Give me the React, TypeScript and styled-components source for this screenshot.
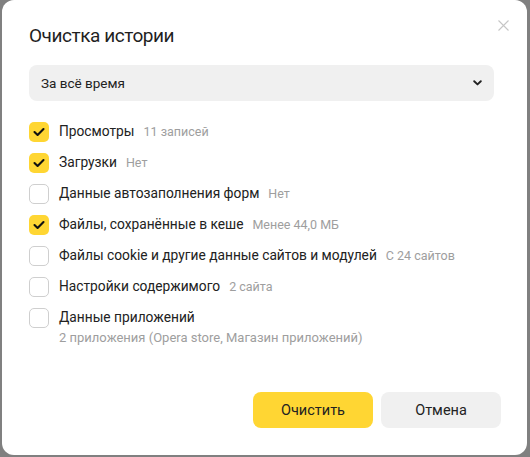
import React from "react";
import styled, { createGlobalStyle } from "styled-components";

const Global = createGlobalStyle`
  html, body { margin: 0; padding: 0; background: #808080; }
  body { font-family: Roboto, "Noto Sans", sans-serif; -webkit-font-smoothing: antialiased; }
`;

const Dialog = styled.div`
  position: relative;
  box-sizing: border-box;
  margin-left: 2px;
  width: 525px;
  height: 455px;
  background: #fff;
  border-radius: 12px;
  padding: 22px 33px 27px 27px;
  display: flex;
  flex-direction: column;
  color: #222;
`;

const Close = styled.button`
  position: absolute;
  top: 18px;
  right: 17px;
  width: 14px;
  height: 14px;
  padding: 0;
  border: 0;
  background: transparent;
  display: flex;
  align-items: center;
  justify-content: center;
`;

const Title = styled.h1`
  margin: 0;
  font-size: 19px;
  letter-spacing: -0.45px;
  line-height: 28px;
  font-weight: 400;
  color: #1f1f1f;
`;

const Select = styled.div`
  margin-top: 15px;
  height: 36px;
  border-radius: 8px;
  background: #f0f0f0;
  display: flex;
  align-items: center;
  justify-content: space-between;
  padding: 0 12px 0 12px;
  font-size: 13.5px;
  color: #222;
`;

const List = styled.div`
  margin-top: 15px;
  display: flex;
  flex-direction: column;
`;

const Row = styled.label`
  display: grid;
  grid-template-columns: 20px 1fr;
  column-gap: 10px;
  align-items: start;
`;

const Box = styled.span<{ $checked: boolean }>`
  box-sizing: border-box;
  margin-top: 5.5px;
  width: 20px;
  height: 20px;
  border-radius: 5px;
  background: ${(p) => (p.$checked ? "#ffd633" : "#fff")};
  border: ${(p) => (p.$checked ? "none" : "1px solid #cfcfcf")};
  display: flex;
  align-items: center;
  justify-content: center;
`;

const Text = styled.div`
  display: flex;
  flex-direction: column;
`;

const Line = styled.div`
  line-height: 31px;
  font-size: 13.75px;
  color: #222;
  white-space: nowrap;
`;

const Hint = styled.span`
  margin-left: 9px;
  font-size: 12.5px;
  color: #9e9e9e;
`;

const Sub = styled.div`
  margin-top: -3px;
  line-height: 16px;
  font-size: 13px;
  color: #9e9e9e;
`;

const Footer = styled.div`
  margin-top: auto;
  margin-right: -7px;
  display: flex;
  justify-content: flex-end;
  gap: 8px;
`;

const Button = styled.button<{ $primary?: boolean }>`
  width: 120px;
  height: 36px;
  border: 0;
  border-radius: 8px;
  background: ${(p) => (p.$primary ? "#ffd633" : "#f0f0f0")};
  color: #222;
  font-family: inherit;
  font-size: 14.5px;
`;

const Check = () => (
  <svg width="12" height="10" viewBox="0 0 12 10">
    <path d="M1.5 5 L4.6 8 L10.5 2" fill="none" stroke="#111" strokeWidth="2.1" strokeLinecap="round" strokeLinejoin="round" />
  </svg>
);

const items: { label: string; hint?: string; sub?: string; checked: boolean }[] = [
  { label: "Просмотры", hint: "11 записей", checked: true },
  { label: "Загрузки", hint: "Нет", checked: true },
  { label: "Данные автозаполнения форм", hint: "Нет", checked: false },
  { label: "Файлы, сохранённые в кеше", hint: "Менее 44,0 МБ", checked: true },
  { label: "Файлы cookie и другие данные сайтов и модулей", hint: "С 24 сайтов", checked: false },
  { label: "Настройки содержимого", hint: "2 сайта", checked: false },
  { label: "Данные приложений", sub: "2 приложения (Opera store, Магазин приложений)", checked: false },
];

export default function App() {
  return (
    <>
      <Global />
      <Dialog>
        <Close aria-label="Закрыть">
          <svg width="11" height="11" viewBox="0 0 11 11">
            <path d="M0.5 0.5 L10.5 10.5 M10.5 0.5 L0.5 10.5" stroke="#c6c6c6" strokeWidth="1.1" />
          </svg>
        </Close>
        <Title>Очистка истории</Title>
        <Select>
          <span>За всё время</span>
          <svg width="9" height="6" viewBox="0 0 9 6">
            <path d="M1.2 1.2 L4.5 4.4 L7.8 1.2" fill="none" stroke="#222" strokeWidth="1.9" strokeLinecap="round" strokeLinejoin="round" />
          </svg>
        </Select>
        <List>
          {items.map((it) => (
            <Row key={it.label}>
              <Box $checked={it.checked}>{it.checked && <Check />}</Box>
              <Text>
                <Line>
                  {it.label}
                  {it.hint && <Hint>{it.hint}</Hint>}
                </Line>
                {it.sub && <Sub>{it.sub}</Sub>}
              </Text>
            </Row>
          ))}
        </List>
        <Footer>
          <Button $primary>Очистить</Button>
          <Button>Отмена</Button>
        </Footer>
      </Dialog>
    </>
  );
}
